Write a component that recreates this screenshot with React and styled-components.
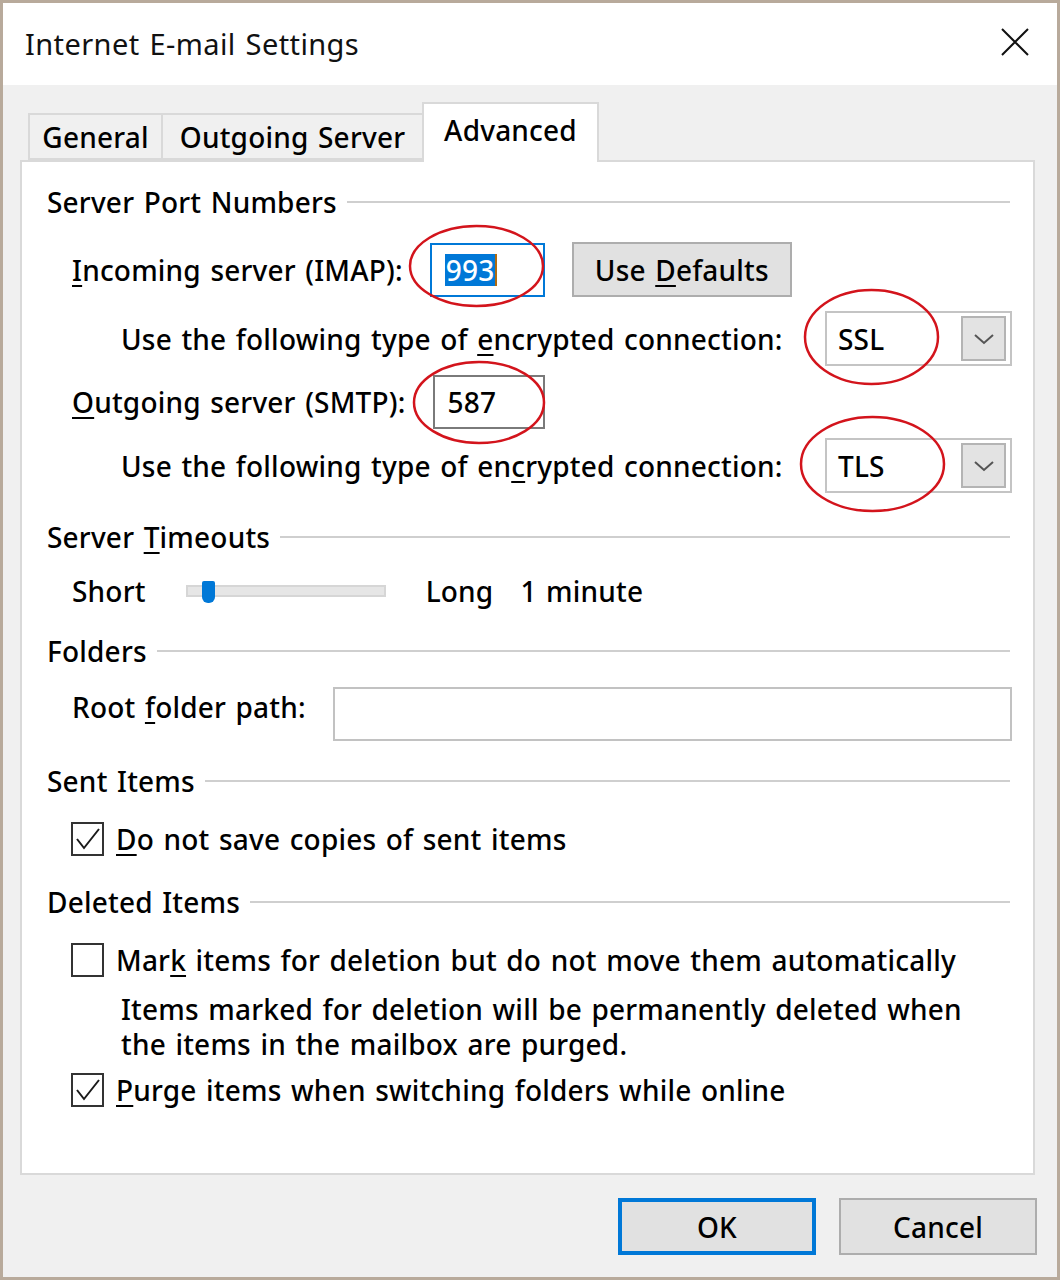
import React from "react";
import styled, { createGlobalStyle } from "styled-components";

const GlobalStyle = createGlobalStyle`
  html, body {
    margin: 0;
    padding: 0;
    background: #ffffff;
  }
  * { box-sizing: border-box; }
`;

const FONT = `"Noto Sans", "Open Sans", sans-serif`;

export default function App() {
  return (
    <>
      <GlobalStyle />
      <Window>
        <TitleBar>
          <Title>Internet E-mail Settings</Title>
          <CloseIcon width="32" height="32" viewBox="0 0 32 32">
            <path d="M3 3 L29 29 M29 3 L3 29" stroke="#111" strokeWidth="2" fill="none" />
          </CloseIcon>
        </TitleBar>

        <Body>
          <TabStrip>
            <Tab $w={135}>General</Tab>
            <Tab $w={263}>Outgoing Server</Tab>
            <Tab $w={177} $active>Advanced</Tab>
          </TabStrip>

          <Panel>
            <GroupHeading $mt={24}>
              <span>Server Port Numbers</span>
            </GroupHeading>

            <Row $mt={24} $h={55} $indent={25}>
              <Label><U>I</U>ncoming server (IMAP):</Label>
              <Annotated>
                <PortInput $w={115} $focused>
                  <Selected>993</Selected>
                  <Caret />
                </PortInput>
                <Ring $l={-22} $t={-19} $w={137} $h={84} />
              </Annotated>
              <Button $w={220} $h={55}>
                <span>Use <U>D</U>efaults</span>
              </Button>
            </Row>

            <EncRow $mt={14}>
              <Label>Use the following type of <U>e</U>ncrypted connection:</Label>
              <Annotated>
                <Select>
                  <SelectValue>SSL</SelectValue>
                  <DropButton>
                    <Chevron />
                  </DropButton>
                </Select>
                <Ring $l={-22} $t={-23} $w={137} $h={98} />
              </Annotated>
            </EncRow>

            <Row $mt={9} $h={54} $indent={25}>
              <Label><U>O</U>utgoing server (SMTP):</Label>
              <Annotated>
                <PortInput $w={112}>587</PortInput>
                <Ring $l={-21} $t={-15} $w={134} $h={85} />
              </Annotated>
            </Row>

            <EncRow $mt={9}>
              <Label>Use the following type of en<U>c</U>rypted connection:</Label>
              <Annotated>
                <Select>
                  <SelectValue>TLS</SelectValue>
                  <DropButton>
                    <Chevron />
                  </DropButton>
                </Select>
                <Ring $l={-26} $t={-23} $w={147} $h={98} />
              </Annotated>
            </EncRow>

            <GroupHeading $mt={28}>
              <span>Server <U>T</U>imeouts</span>
            </GroupHeading>

            <Row $mt={22} $h={32} $indent={25}>
              <Label>Short</Label>
              <Slider>
                <Thumb />
              </Slider>
              <Label>Long</Label>
              <Label>1 minute</Label>
            </Row>

            <GroupHeading $mt={28}>
              <span>Folders</span>
            </GroupHeading>

            <Row $mt={20} $h={54} $indent={25}>
              <Label $dy={-7}>Root <U>f</U>older path:</Label>
              <TextField />
            </Row>

            <GroupHeading $mt={24}>
              <span>Sent Items</span>
            </GroupHeading>

            <CheckRow $mt={25}>
              <Checkbox checked />
              <Label><U>D</U>o not save copies of sent items</Label>
            </CheckRow>

            <GroupHeading $mt={30}>
              <span>Deleted Items</span>
            </GroupHeading>

            <CheckRow $mt={25}>
              <Checkbox />
              <Label>Mar<U>k</U> items for deletion but do not move them automatically</Label>
            </CheckRow>

            <Note>
              Items marked for deletion will be permanently deleted when
              <br />
              the items in the mailbox are purged.
            </Note>

            <CheckRow $mt={11}>
              <Checkbox checked />
              <Label><U>P</U>urge items when switching folders while online</Label>
            </CheckRow>
          </Panel>

          <ButtonRow>
            <Button $w={198} $h={57} $default>OK</Button>
            <Button $w={198} $h={57}>Cancel</Button>
          </ButtonRow>
        </Body>
      </Window>
    </>
  );
}

function Checkbox({ checked }) {
  return (
    <CheckBox>
      {checked && (
        <svg width="29" height="30" viewBox="0 0 29 30">
          <path d="M4 15 L11 24 L26 5" stroke="#1a1a1a" strokeWidth="2" fill="none" />
        </svg>
      )}
    </CheckBox>
  );
}

function Chevron() {
  return (
    <svg width="22" height="12" viewBox="0 0 22 12">
      <path d="M2 2 L11 10 L20 2" stroke="#555" strokeWidth="2" fill="none" />
    </svg>
  );
}

function Ring({ $l, $t, $w, $h }) {
  return (
    <RingSvg $l={$l} $t={$t} width={$w} height={$h} viewBox={`0 0 ${$w} ${$h}`}>
      <ellipse
        cx={$w / 2}
        cy={$h / 2}
        rx={$w / 2 - 2}
        ry={$h / 2 - 2}
        stroke="#d3141c"
        strokeWidth="2.5"
        fill="none"
      />
    </RingSvg>
  );
}

const Window = styled.div`
  width: 1060px;
  height: 1280px;
  border: 3px solid #b8aa9b;
  background: #f0f0f0;
  display: flex;
  flex-direction: column;
  font-family: ${FONT};
  font-size: 28px;
  font-weight: 500;
  letter-spacing: 0.2px;
  word-spacing: 2px;
  color: #000;
`;

const TitleBar = styled.div`
  height: 82px;
  background: #ffffff;
  display: flex;
  align-items: center;
  justify-content: space-between;
  padding: 0 26px 0 22px;
`;

const Title = styled.div`
  font-size: 29px;
  font-weight: 400;
  letter-spacing: 0.4px;
  color: #111;
  margin-top: -2px;
`;

const CloseIcon = styled.svg`
  display: block;
  margin-top: -4px;
`;

const Body = styled.div`
  flex: 1;
  display: flex;
  flex-direction: column;
  padding: 18px 22px 0 17px;
`;

const TabStrip = styled.div`
  height: 57px;
  display: flex;
  align-items: flex-end;
  padding-left: 10px;
`;

const Tab = styled.div`
  position: relative;
  width: ${(p) => p.$w}px;
  height: ${(p) => (p.$active ? 60 : 47)}px;
  margin-bottom: ${(p) => (p.$active ? -2 : 0)}px;
  margin-left: -2px;
  z-index: ${(p) => (p.$active ? 2 : 1)};
  background: ${(p) => (p.$active ? "#ffffff" : "#f0f0f0")};
  border: 2px solid #d9d9d9;
  border-bottom: ${(p) => (p.$active ? "none" : "2px solid #d9d9d9")};
  display: flex;
  align-items: ${(p) => (p.$active ? "flex-start" : "center")};
  justify-content: center;
  padding-top: ${(p) => (p.$active ? 9 : 0)}px;
  line-height: 34px;
  white-space: nowrap;
`;

const Panel = styled.div`
  position: relative;
  height: 1015px;
  background: #ffffff;
  border: 2px solid #d9d9d9;
  padding: 0 23px 0 25px;
  display: flex;
  flex-direction: column;
`;

const GroupHeading = styled.div`
  margin-top: ${(p) => p.$mt}px;
  height: 32px;
  display: flex;
  align-items: center;
  white-space: nowrap;

  &::after {
    content: "";
    flex: 1;
    height: 2px;
    margin-left: 10px;
    background: #cfcfcf;
  }
`;

const Row = styled.div`
  margin-top: ${(p) => p.$mt}px;
  height: ${(p) => p.$h}px;
  padding-left: ${(p) => p.$indent}px;
  display: flex;
  align-items: center;
  gap: 27px;
`;

const EncRow = styled.div`
  margin-top: ${(p) => p.$mt}px;
  height: 55px;
  padding-left: 74px;
  margin-right: -2px;
  display: flex;
  align-items: center;
  justify-content: space-between;
`;

const CheckRow = styled.div`
  margin-top: ${(p) => p.$mt}px;
  height: 34px;
  padding-left: 24px;
  display: flex;
  align-items: center;
  gap: 12px;
`;

const Label = styled.span`
  white-space: nowrap;
  line-height: 34px;
  position: relative;
  top: ${(p) => p.$dy || 0}px;
`;

const U = styled.span`
  text-decoration: underline;
  text-underline-offset: 4px;
  text-decoration-thickness: 2px;
`;

const Annotated = styled.div`
  position: relative;
  display: flex;
`;

const RingSvg = styled.svg`
  position: absolute;
  left: ${(p) => p.$l}px;
  top: ${(p) => p.$t}px;
  pointer-events: none;
  overflow: visible;
`;

const PortInput = styled.div`
  width: ${(p) => p.$w}px;
  height: 54px;
  background: #ffffff;
  border: 2px solid ${(p) => (p.$focused ? "#0078d7" : "#7a7a7a")};
  display: flex;
  align-items: center;
  padding-left: 13px;
`;

const Selected = styled.span`
  background: #0078d7;
  color: #ffffff;
  line-height: 32px;
  padding: 0 1px;
`;

const Caret = styled.span`
  width: 2px;
  height: 32px;
  background: #b06a10;
`;

const Button = styled.div`
  width: ${(p) => p.$w}px;
  height: ${(p) => p.$h}px;
  background: #e1e1e1;
  border: ${(p) => (p.$default ? "4px solid #0078d7" : "2px solid #adadad")};
  display: flex;
  align-items: center;
  justify-content: center;
  white-space: nowrap;
`;

const Select = styled.div`
  width: 187px;
  height: 55px;
  background: #ffffff;
  border: 2px solid #c4c4c4;
  display: flex;
  align-items: center;
  justify-content: space-between;
  padding: 0 4px 0 11px;
`;

const SelectValue = styled.span`
  line-height: 34px;
`;

const DropButton = styled.div`
  width: 45px;
  height: 45px;
  background: #e3e3e3;
  border: 2px solid #b4b4b4;
  display: flex;
  align-items: center;
  justify-content: center;
`;

const Slider = styled.div`
  position: relative;
  width: 200px;
  height: 12px;
  margin: 0 13px;
  background: #e6e6e6;
  border: 2px solid #d6d6d6;
`;

const Thumb = styled.div`
  position: absolute;
  left: 14px;
  top: -6px;
  width: 13px;
  height: 22px;
  background: #0078d7;
  border-radius: 2px 2px 6px 6px;
`;

const TextField = styled.div`
  flex: 1;
  margin-right: -2px;
  height: 54px;
  background: #ffffff;
  border: 2px solid #c2c2c2;
`;

const CheckBox = styled.div`
  width: 33px;
  height: 34px;
  background: #ffffff;
  border: 2px solid #333333;
  display: flex;
  align-items: center;
  justify-content: center;
`;

const Note = styled.div`
  margin-top: 15px;
  padding-left: 74px;
  line-height: 35px;
`;

const ButtonRow = styled.div`
  margin-top: 23px;
  display: flex;
  justify-content: flex-end;
  gap: 23px;
  margin-right: -2px;
`;
